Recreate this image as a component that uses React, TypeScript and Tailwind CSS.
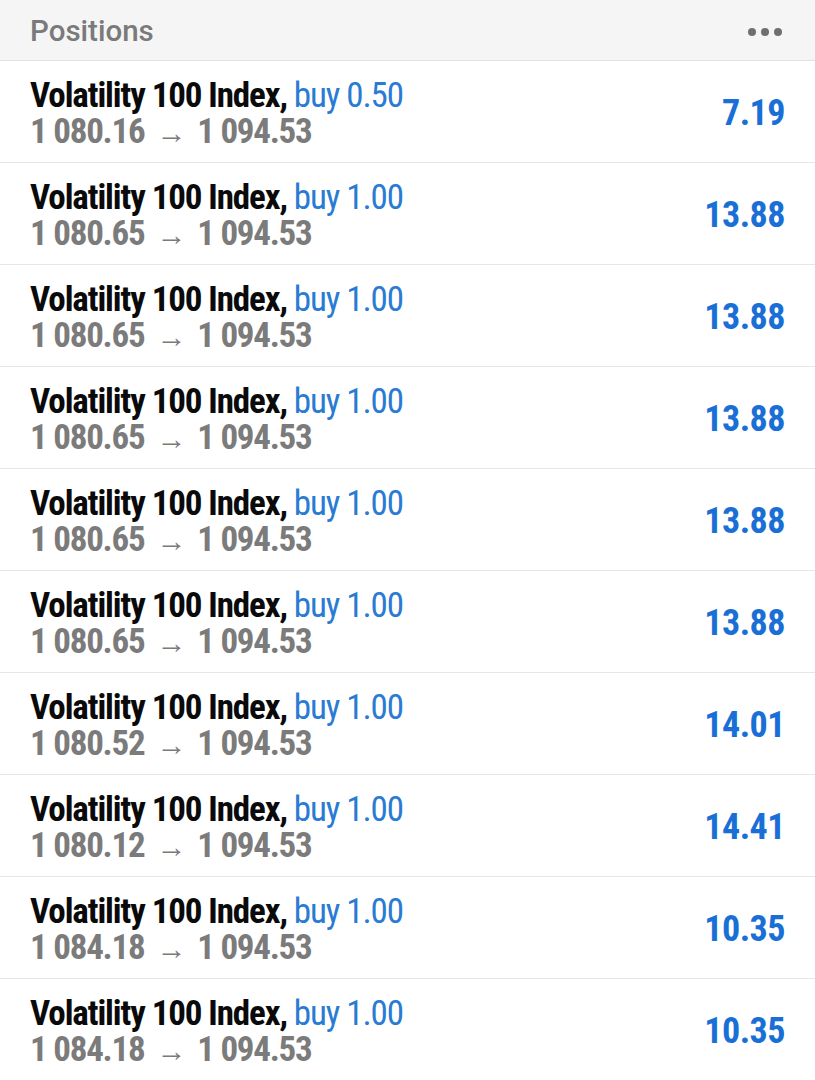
import React from "react";

const rows = [
  { lot: "0.50", open: "1 080.16", profit: "7.19" },
  { lot: "1.00", open: "1 080.65", profit: "13.88" },
  { lot: "1.00", open: "1 080.65", profit: "13.88" },
  { lot: "1.00", open: "1 080.65", profit: "13.88" },
  { lot: "1.00", open: "1 080.65", profit: "13.88" },
  { lot: "1.00", open: "1 080.65", profit: "13.88" },
  { lot: "1.00", open: "1 080.52", profit: "14.01" },
  { lot: "1.00", open: "1 080.12", profit: "14.41" },
  { lot: "1.00", open: "1 084.18", profit: "10.35" },
  { lot: "1.00", open: "1 084.18", profit: "10.35" },
];

export default function App() {
  return (
    <div className="w-[815px] h-[1080px] overflow-hidden bg-white font-['Roboto_Condensed','Roboto',sans-serif]">
      <div className="h-[61px] bg-[#f5f5f5] border-b border-[#e2e2e2] flex items-center justify-between pl-[30px] pr-[33px] pt-[3px]">
        <span className="font-['Roboto',sans-serif] font-medium text-[29.5px] text-[#7a7a7a] leading-none">Positions</span>
        <div className="flex gap-[5px]">
          <span className="w-[8px] h-[8px] rounded-full bg-[#6f6f6f]" />
          <span className="w-[8px] h-[8px] rounded-full bg-[#6f6f6f]" />
          <span className="w-[8px] h-[8px] rounded-full bg-[#6f6f6f]" />
        </div>
      </div>
      {rows.map((r, i) => (
        <div key={i} className="h-[102px] border-b border-[#e6e6e6] flex items-center justify-between pl-[30px] pr-[30px]">
          <div className="flex flex-col pt-[5px]">
            <div className="text-[35px] leading-[36px] whitespace-nowrap tracking-[-1.1px]">
              <span className="font-bold text-[#0a0a0a]">Volatility 100 Index,</span>{" "}
              <span className="text-[#2a7bd3]">buy {r.lot}</span>
            </div>
            <div className="text-[35px] leading-[36px] whitespace-nowrap text-[#7b7b7b] flex items-center tracking-[-1.25px]">
              <span className="font-bold">{r.open}</span>
              <span className="text-[30px] font-normal text-[#7b7b7b] mx-[12px] relative top-[1px]">→</span>
              <span className="font-bold">1 094.53</span>
            </div>
          </div>
          <div className="text-[36px] font-bold text-[#1a6fd6] leading-none tracking-[-0.5px] pt-[2px]">{r.profit}</div>
        </div>
      ))}
    </div>
  );
}
